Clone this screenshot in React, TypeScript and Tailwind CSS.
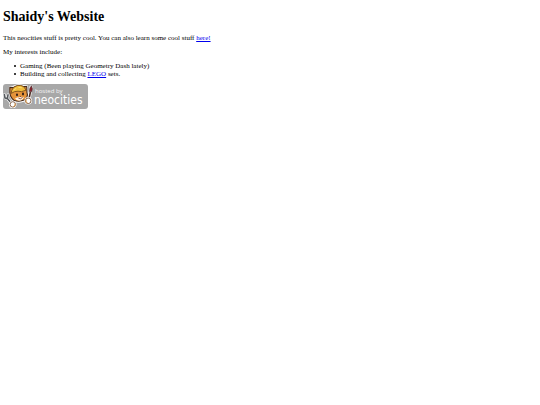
import React from "react";

const NeocitiesBadge = () => (
  <svg
    viewBox="0 0 85 25"
    className="block w-[85px] h-[25px] overflow-visible"
    role="img"
    aria-label="Hosted by Neocities"
  >
    <rect width="85" height="25" rx="3" fill="#a8a8a8" />

    {/* Cat head */}
    <path
      d="M6.6 8 L6.6 3 L10 2.6 Q15 -0.4 20 1.6 L24.4 2 L24.6 8 Q26 13 22.5 16.4 Q16 19.5 10.4 17 Q6.8 13.5 6.6 8Z"
      fill="#fff"
      stroke="#fff"
      strokeWidth="1.2"
      strokeLinejoin="round"
    />
    <path
      d="M6.8 8.4 L6.8 3.4 L10 3.6 Q15 0.5 20 2.6 L23.8 2.6 L24 8.6 Q25.4 12.6 21.8 15.8 Q16 18.4 10.8 16.2 Q7.2 13.5 6.8 8.4Z"
      fill="#e4933a"
      stroke="#43291b"
      strokeWidth="1.1"
      strokeLinejoin="round"
    />
    <path d="M12 14.6 Q16 12 21 13.2 Q19.5 16.6 16 16.7 Q13 16.6 12 14.6Z" fill="#fff0dc" />
    {/* Bandana */}
    <path
      d="M8.2 9.4 Q8.4 3 14.8 1.4 Q21 0.8 23 6.2 Q18 8.6 15 7.2 Q11.5 7 8.2 9.4Z"
      fill="#f0bd3c"
      stroke="#7a4c19"
      strokeWidth="0.9"
    />
    <path d="M10.6 6 L13.4 4.2 M15.4 3.4 L19 3.8" stroke="#ffe98c" strokeWidth="0.7" />
    <ellipse cx="14" cy="10.8" rx="1" ry="1.4" fill="#2d1b16" />
    <ellipse cx="20" cy="10" rx="1" ry="1.4" fill="#2d1b16" />
    <path d="M15.4 14 Q17.4 15.8 19.6 13.4" fill="none" stroke="#6f2c1d" strokeWidth="0.8" />
    <path d="M16.6 12 h1.6 l-0.8 0.9Z" fill="#5d2a22" />

    {/* Wrench */}
    <path
      d="M1.4 10.6 L2 14 L4.4 14.6 L9 20 M5 10.8 L4.4 14.6"
      fill="none"
      stroke="#fff"
      strokeWidth="2.8"
      strokeLinecap="round"
      strokeLinejoin="round"
    />
    <path
      d="M1.4 10.6 L2 14 L4.4 14.6 L9 20 M5 10.8 L4.4 14.6"
      fill="none"
      stroke="#54585c"
      strokeWidth="1.6"
      strokeLinecap="round"
      strokeLinejoin="round"
    />
    {/* Brush */}
    <path d="M28 3 L26 15" stroke="#fff" strokeWidth="3.2" strokeLinecap="round" />
    <path d="M27.4 8 L26 15" stroke="#4b2a20" strokeWidth="1.6" />
    <path d="M26.4 7.6 Q26.2 4 28.4 1.8 Q30 4.6 28.6 7.8Z" fill="#8e2430" stroke="#3c2020" strokeWidth="0.6" />

    {/* Paws */}
    <circle cx="9.8" cy="20.4" r="3.7" fill="#fff" />
    <circle cx="9.8" cy="20.4" r="2.7" fill="#fff" stroke="#6d4528" strokeWidth="0.8" />
    <path d="M10.4 22.8 Q12.4 22 12.2 19.4" fill="none" stroke="#e09a44" strokeWidth="1" />
    <circle cx="25.2" cy="16.8" r="3.8" fill="#fff" />
    <circle cx="25.2" cy="16.8" r="2.8" fill="#fff" stroke="#6d4528" strokeWidth="0.8" />
    <path d="M24.4 19.2 Q22.6 18 23 15.6" fill="none" stroke="#e09a44" strokeWidth="1" />

    <text x="32" y="9" fill="#f4f4f4" className="font-['Open_Sans',sans-serif] text-[6px]">
      hosted by
    </text>
    <text x="31" y="20" fill="#fff" className="font-['DejaVu_Sans_Condensed',sans-serif] text-[12px]">
      neocities
    </text>
  </svg>
);

const bullet =
  "before:mr-[4px] before:inline-block before:size-[2px] before:rounded-full before:bg-black before:align-middle before:content-['']";

const App = () => {
  return (
    <main className="min-h-screen bg-white px-[3px] pt-[9px] font-['Liberation_Serif',serif] text-[7px] leading-[8px] text-black">
      <h1 className="mb-[9px] text-[14px] leading-[16px] font-bold">Shaidy's Website</h1>
      <p className="mb-[6px]">
        This neocities stuff is pretty cool. You can also learn some cool stuff{" "}
        <a href="#here" className="text-[#0000ee] underline">
          here!
        </a>
      </p>
      <p className="mb-[6px]">My interests include:</p>
      <ul className="mb-[6px] pl-[11px]">
        <li className={bullet}>Gaming (Been playing Geometry Dash lately)</li>
        <li className={bullet}>
          Building and collecting{" "}
          <a href="#lego" className="text-[#0000ee] underline">
            LEGO
          </a>{" "}
          sets.
        </li>
      </ul>
      <a href="#neocities" className="inline-block">
        <NeocitiesBadge />
      </a>
    </main>
  );
};

export default App;
